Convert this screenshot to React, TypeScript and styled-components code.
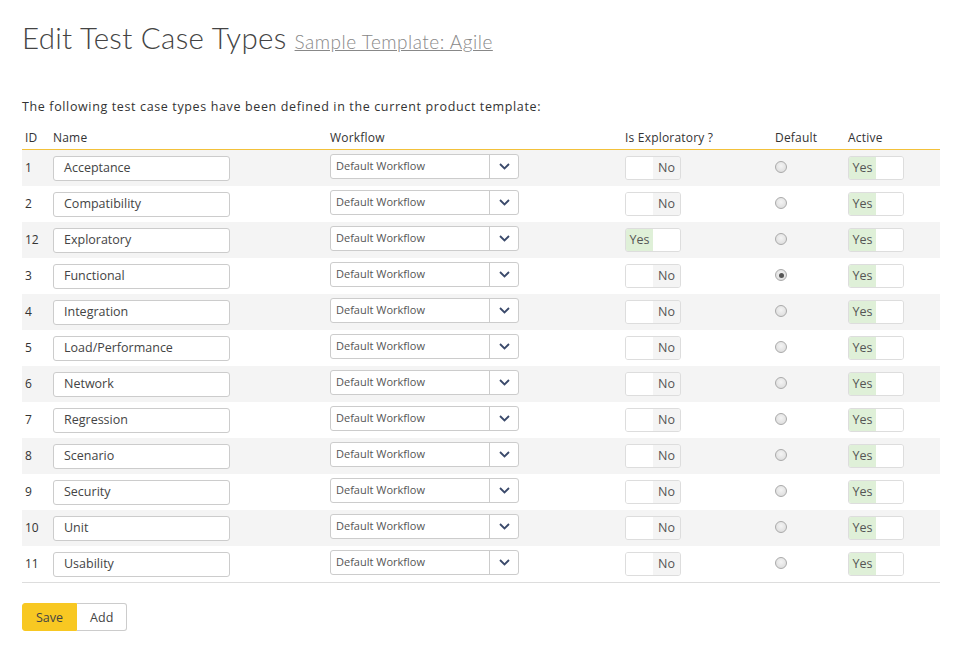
import { FC } from 'react';
import styled, { createGlobalStyle } from 'styled-components';

const GlobalStyle = createGlobalStyle`
  body {
    margin: 0;
    background: #fff;
    font-family: 'Open Sans', 'Noto Sans', sans-serif;
    color: #333;
  }
`;

const Page = styled.div`
  padding: 18px 31px 0 22px;
  width: 918px;
`;

const Heading = styled.h1`
  margin: 0;
  font-family: 'Lato', sans-serif;
  font-weight: 300;
  font-size: 29.5px;
  line-height: 40px;
  color: #444;
  letter-spacing: 0.3px;
`;

const TemplateLink = styled.a`
  font-size: 19px;
  color: #888;
  text-decoration: underline;
  margin-left: 8px;
  letter-spacing: 0.5px;
`;

const Intro = styled.p`
  margin: 36px 0 10px;
  font-size: 12.5px;
  line-height: 18px;
  letter-spacing: 0.63px;
  color: #333;
`;

const COLS = '31px 277px 295px 150px 73px 1fr';

const HeadRow = styled.div`
  display: grid;
  grid-template-columns: ${COLS};
  align-items: center;
  height: 23px;
  border-bottom: 1px solid #f3c13a;
  font-size: 12px;
  letter-spacing: 0.2px;
  color: #333;
`;

const HeadCell = styled.div<{ $first?: boolean }>`
  padding-left: ${({ $first }) => ($first ? '3px' : '0')};
`;

const Row = styled.div<{ $striped: boolean }>`
  display: grid;
  grid-template-columns: ${COLS};
  align-items: center;
  height: 36px;
  background: ${({ $striped }) => ($striped ? '#f4f4f4' : '#fff')};
`;

const IdCell = styled.div`
  padding-left: 3px;
  margin-top: -1px;
  font-size: 12px;
  color: #333;
`;

const NameInput = styled.div`
  box-sizing: border-box;
  width: 177px;
  height: 25px;
  border: 1px solid #ccc;
  border-radius: 3px;
  background: #fff;
  padding-left: 10px;
  font-size: 12.5px;
  line-height: 21px;
  color: #444;
`;

const Select = styled.div`
  box-sizing: border-box;
  display: flex;
  width: 189px;
  height: 25px;
  margin-top: -3px;
  border: 1px solid #ccc;
  border-radius: 3px;
  background: #fff;
`;

const SelectText = styled.div`
  flex: 1;
  padding-left: 5px;
  font-size: 11px;
  line-height: 21px;
  color: #555;
  border-right: 1px solid #ccc;
`;

const SelectArrow = styled.div`
  width: 28px;
  display: flex;
  align-items: center;
  justify-content: center;
`;

const Toggle = styled.div`
  box-sizing: border-box;
  display: flex;
  width: 56px;
  height: 24px;
  border: 1px solid #ddd;
  border-radius: 3px;
  overflow: hidden;
  font-size: 12.5px;
  line-height: 20px;
  color: #555;
`;

const ToggleHalf = styled.div<{ $tone: 'yes' | 'no' | 'blank' }>`
  flex: 1;
  display: flex;
  align-items: center;
  justify-content: center;
  background: ${({ $tone }) =>
    $tone === 'yes' ? '#dff0d8' : $tone === 'no' ? '#f4f4f4' : '#fff'};
`;

const Radio = styled.div<{ $checked: boolean }>`
  box-sizing: border-box;
  width: 12px;
  height: 12px;
  margin-top: -2px;
  border-radius: 50%;
  border: 1px solid #aaa;
  background: radial-gradient(circle at 50% 40%, #f4f4f4, #d8d8d8);
  display: flex;
  align-items: center;
  justify-content: center;

  &::after {
    content: '';
    display: ${({ $checked }) => ($checked ? 'block' : 'none')};
    width: 5px;
    height: 5px;
    border-radius: 50%;
    background: #555;
  }
`;

const Footer = styled.div`
  border-top: 1px solid #ddd;
  padding-top: 20px;
  display: flex;
`;

const Button = styled.button<{ $primary?: boolean }>`
  box-sizing: border-box;
  height: 28px;
  padding: 0 13px;
  font-family: inherit;
  font-size: 12.5px;
  color: #444;
  border: 1px solid ${({ $primary }) => ($primary ? '#f8c822' : '#ccc')};
  border-left-width: ${({ $primary }) => ($primary ? '1px' : '0')};
  background: ${({ $primary }) => ($primary ? '#f8c822' : '#fff')};
  border-radius: ${({ $primary }) => ($primary ? '3px 0 0 3px' : '0 3px 3px 0')};
  cursor: pointer;
`;

interface ICaseType {
  id: number;
  name: string;
  exploratory: boolean;
  isDefault: boolean;
}

const types: ICaseType[] = [
  { id: 1, name: 'Acceptance', exploratory: false, isDefault: false },
  { id: 2, name: 'Compatibility', exploratory: false, isDefault: false },
  { id: 12, name: 'Exploratory', exploratory: true, isDefault: false },
  { id: 3, name: 'Functional', exploratory: false, isDefault: true },
  { id: 4, name: 'Integration', exploratory: false, isDefault: false },
  { id: 5, name: 'Load/Performance', exploratory: false, isDefault: false },
  { id: 6, name: 'Network', exploratory: false, isDefault: false },
  { id: 7, name: 'Regression', exploratory: false, isDefault: false },
  { id: 8, name: 'Scenario', exploratory: false, isDefault: false },
  { id: 9, name: 'Security', exploratory: false, isDefault: false },
  { id: 10, name: 'Unit', exploratory: false, isDefault: false },
  { id: 11, name: 'Usability', exploratory: false, isDefault: false },
];

const YesNo: FC<{ on: boolean }> = ({ on }) =>
  on ? (
    <Toggle>
      <ToggleHalf $tone="yes">Yes</ToggleHalf>
      <ToggleHalf $tone="blank" />
    </Toggle>
  ) : (
    <Toggle>
      <ToggleHalf $tone="blank" />
      <ToggleHalf $tone="no">No</ToggleHalf>
    </Toggle>
  );

const Chevron = () => (
  <svg width="11" height="7" viewBox="0 0 11 7">
    <path d="M1 1l4.5 4.5L10 1" fill="none" stroke="#3b4a6b" strokeWidth="1.8" />
  </svg>
);

export default function App() {
  return (
    <Page>
      <GlobalStyle />
      <Heading>
        Edit Test Case Types
        <TemplateLink href="#">Sample Template: Agile</TemplateLink>
      </Heading>
      <Intro>The following test case types have been defined in the current product template:</Intro>
      <HeadRow>
        <HeadCell $first>ID</HeadCell>
        <HeadCell>Name</HeadCell>
        <HeadCell>Workflow</HeadCell>
        <HeadCell>Is Exploratory ?</HeadCell>
        <HeadCell>Default</HeadCell>
        <HeadCell>Active</HeadCell>
      </HeadRow>
      {types.map((t, i) => (
        <Row key={t.id} $striped={i % 2 === 0}>
          <IdCell>{t.id}</IdCell>
          <NameInput>{t.name}</NameInput>
          <Select>
            <SelectText>Default Workflow</SelectText>
            <SelectArrow>
              <Chevron />
            </SelectArrow>
          </Select>
          <YesNo on={t.exploratory} />
          <Radio $checked={t.isDefault} />
          <YesNo on />
        </Row>
      ))}
      <Footer>
        <Button $primary>Save</Button>
        <Button>Add</Button>
      </Footer>
    </Page>
  );
}
